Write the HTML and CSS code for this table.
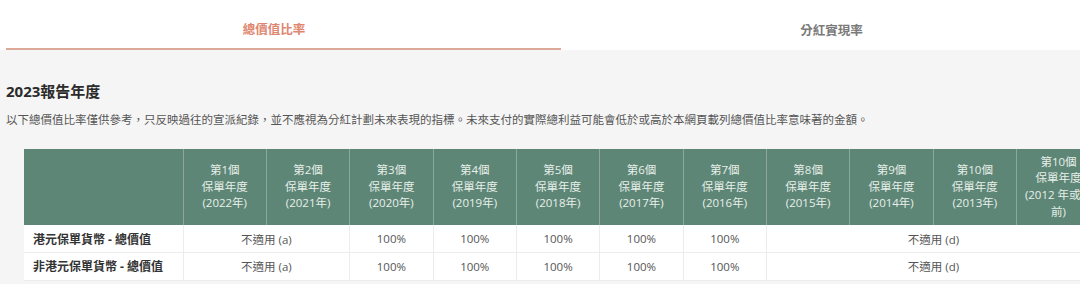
FILE: index.html
```html
<!DOCTYPE html>
<html lang="zh-Hant">
<head>
<meta charset="utf-8">
<title>總價值比率</title>
<link rel="stylesheet" href="styles.css">
</head>
<body>
<div class="tabs">
  <div class="tab tab-active"><span>總價值比率</span></div>
  <div class="tab"><span>分紅實現率</span></div>
</div>
<main class="content">
  <h2 class="title">2023報告年度</h2>
  <p class="desc">以下總價值比率僅供參考，只反映過往的宣派紀錄，並不應視為分紅計劃未來表現的指標。未來支付的實際總利益可能會低於或高於本網頁載列總價值比率意味著的金額。</p>
  <div class="table-wrap">
    <table class="ratio">
      <colgroup>
        <col class="c-label">
        <col class="c-year"><col class="c-year"><col class="c-year"><col class="c-year"><col class="c-year">
        <col class="c-year"><col class="c-year"><col class="c-year"><col class="c-year"><col class="c-year">
        <col class="c-year">
      </colgroup>
      <thead>
        <tr>
          <th></th>
          <th>第1個<br>保單年度<br>(2022年)</th>
          <th>第2個<br>保單年度<br>(2021年)</th>
          <th>第3個<br>保單年度<br>(2020年)</th>
          <th>第4個<br>保單年度<br>(2019年)</th>
          <th>第5個<br>保單年度<br>(2018年)</th>
          <th>第6個<br>保單年度<br>(2017年)</th>
          <th>第7個<br>保單年度<br>(2016年)</th>
          <th>第8個<br>保單年度<br>(2015年)</th>
          <th>第9個<br>保單年度<br>(2014年)</th>
          <th>第10個<br>保單年度<br>(2013年)</th>
          <th>第10個<br>保單年度<br>(2012 年或之<br>前)</th>
        </tr>
      </thead>
      <tbody>
        <tr>
          <td class="label">港元保單貨幣 - 總價值</td>
          <td colspan="2">不適用 (a)</td>
          <td>100%</td><td>100%</td><td>100%</td><td>100%</td><td>100%</td>
          <td colspan="4">不適用 (d)</td>
        </tr>
        <tr>
          <td class="label">非港元保單貨幣 - 總價值</td>
          <td colspan="2">不適用 (a)</td>
          <td>100%</td><td>100%</td><td>100%</td><td>100%</td><td>100%</td>
          <td colspan="4">不適用 (d)</td>
        </tr>
      </tbody>
    </table>
  </div>
</main>
</body>
</html>
```

FILE: styles.css
```css
html, body {
  margin: 0;
  padding: 0;
}
body {
  background: #f5f5f5;
  font-family: "Open Sans", "Noto Sans CJK TC", sans-serif;
  color: #333;
  width: 1080px;
  height: 284px;
  overflow: hidden;
}
.tabs {
  display: flex;
  background: #fff;
  height: 50px;
  padding-left: 6px;
}
.tab {
  width: 555px;
  flex: none;
  display: flex;
  align-items: center;
  justify-content: center;
  font-size: 12.5px;
  font-weight: 600;
  color: #7a7a7a;
  box-sizing: border-box;
  padding-top: 9px;
  padding-right: 14px;
}
.tab-active {
  color: #e08670;
  border-bottom: 2px solid #dea898;
  padding-right: 19px;
}
.content {
  padding: 0 6px;
}
.title {
  margin: 30px 0 0;
  font-size: 15px;
  font-weight: 700;
  line-height: 22px;
  color: #2b2b2b;
}
.desc {
  margin: 10px 0 0;
  font-size: 11.5px;
  line-height: 16px;
  color: #555;
  white-space: nowrap;
}
.table-wrap {
  margin-top: 21px;
  padding-left: 18px;
}
.ratio {
  border-collapse: collapse;
  table-layout: fixed;
  width: 1076px;
  background: #fff;
}
.c-label { width: 159px; }
.c-year { width: 83.33px; }
.ratio th {
  background: #5e8676;
  color: #e8f0ea;
  font-weight: 400;
  font-size: 11.5px;
  line-height: 16.7px;
  height: 76px;
  padding: 0 2px;
  box-sizing: border-box;
  border-left: 1px solid #8aa99c;
  text-align: center;
  vertical-align: middle;
}
.ratio th:first-child {
  border-left: none;
}
.ratio td {
  height: 27.5px;
  padding: 0;
  box-sizing: border-box;
  font-size: 11.5px;
  color: #555;
  text-align: center;
  vertical-align: middle;
  border-left: 1px solid #ececec;
  border-bottom: 1px solid #ececec;
}
.ratio td.label {
  border-left: none;
  text-align: left;
  padding-left: 9px;
  font-weight: 700;
  font-size: 12px;
  color: #333;
}
```
